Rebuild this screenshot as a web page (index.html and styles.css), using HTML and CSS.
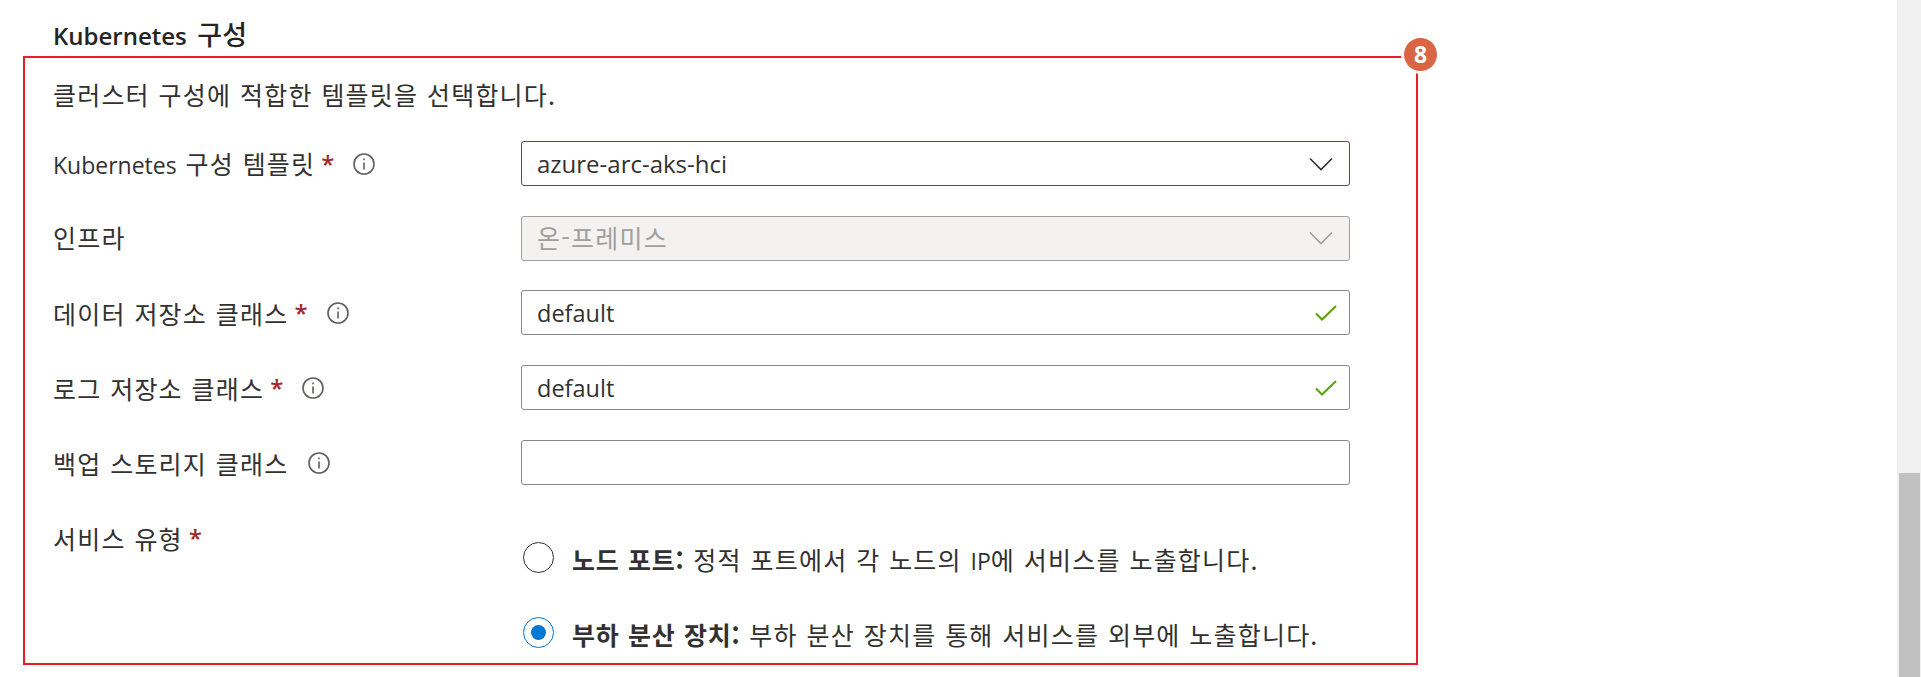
FILE: index.html
```html
<!DOCTYPE html>
<html lang="ko">
<head>
<meta charset="utf-8">
<title>Kubernetes 구성</title>
<link rel="stylesheet" href="styles.css">
</head>
<body>
<div class="page">
  <main class="content">
    <h2 class="title"><span class="lat-title">Kubernetes</span> 구성</h2>
    <section class="callout">
      <span class="badge">8</span>
      <p class="intro">클러스터 구성에 적합한 템플릿을 선택합니다.</p>
      <div class="form">
        <div class="label"><span><span class="lat">Kubernetes</span> 구성 템플릿</span><span class="req">*</span><svg class="info" viewBox="0 0 22 22"><circle cx="11" cy="11" r="10" /><path d="M11 9.5v7M11 5.6v1.6" /></svg></div>
        <div class="field purple"><span class="lat-field wide-text">azure-arc-aks-hci</span><svg class="chev" viewBox="0 0 24 14"><path d="M1 1.5l11 11 11-11" /></svg></div>

        <div class="label raised"><span>인프라</span></div>
        <div class="field disabled"><span>온-프레미스</span><svg class="chev" viewBox="0 0 24 14"><path d="M1 1.5l11 11 11-11" /></svg></div>

        <div class="label"><span>데이터 저장소 클래스</span><span class="req">*</span><svg class="info" viewBox="0 0 22 22"><circle cx="11" cy="11" r="10" /><path d="M11 9.5v7M11 5.6v1.6" /></svg></div>
        <div class="field"><span class="lat-field">default</span><svg class="check" viewBox="0 0 22 16"><path d="M1 8.5l6 6L21 1" /></svg></div>

        <div class="label"><span>로그 저장소 클래스</span><span class="req">*</span><svg class="info" viewBox="0 0 22 22"><circle cx="11" cy="11" r="10" /><path d="M11 9.5v7M11 5.6v1.6" /></svg></div>
        <div class="field"><span class="lat-field">default</span><svg class="check" viewBox="0 0 22 16"><path d="M1 8.5l6 6L21 1" /></svg></div>

        <div class="label"><span>백업 스토리지 클래스</span><svg class="info wide" viewBox="0 0 22 22"><circle cx="11" cy="11" r="10" /><path d="M11 9.5v7M11 5.6v1.6" /></svg></div>
        <div class="field"></div>

        <div class="label top"><span>서비스 유형</span><span class="req">*</span></div>
        <div class="radios">
          <div class="radio-row"><span class="radio"></span><span class="radio-text"><b>노드 포트:</b> 정적 포트에서 각 노드의 <span class="lat">IP</span>에 서비스를 노출합니다.</span></div>
          <div class="radio-row"><span class="radio on"></span><span class="radio-text"><b>부하 분산 장치:</b> 부하 분산 장치를 통해 서비스를 외부에 노출합니다.</span></div>
        </div>
      </div>
    </section>
  </main>
  <aside class="scrollbar"><div class="thumb"></div></aside>
</div>
</body>
</html>
```

FILE: styles.css
```css
* { box-sizing: border-box; }
html, body { margin: 0; height: 100%; overflow: hidden; background: #fff; }
body {
  font-family: "Noto Sans CJK KR", sans-serif;
  font-size: 25px;
  letter-spacing: 1.2px;
  word-spacing: 0.6px;
  color: #323130;
}
.lat { font-family: "Open Sans", sans-serif; font-size: 23px; letter-spacing: 0; }
.lat-field { font-family: "Open Sans", sans-serif; font-size: 23.5px; letter-spacing: 0; }
.lat-field.wide-text { font-size: 24px; }
.lat-title { font-family: "Open Sans", sans-serif; font-size: 24px; font-weight: 600; }
.page { display: flex; height: 677px; }
.content { flex: 1; padding: 0 0 0 23px; min-width: 0; }
.title {
  margin: 0;
  height: 56px;
  padding: 16px 0 0 30px;
  font-size: 27px;
  line-height: 36px;
  font-weight: 500;
  color: #252423;
  letter-spacing: 0;
  word-spacing: 3px;
}
.callout {
  position: relative;
  width: 1395px;
  height: 609px;
  border: 2px solid #ed1c24;
  padding: 18px 0 0 28px;
}
.badge {
  position: absolute;
  top: -20px;
  right: -21px;
  width: 33px;
  height: 33px;
  border-radius: 50%;
  background: #d96544;
  color: #fff;
  font-family: "Open Sans", sans-serif;
  font-size: 23px;
  font-weight: 700;
  line-height: 33px;
  letter-spacing: 0;
  text-align: center;
  box-shadow: 0 0 0 3px #fff;
}
.intro { margin: 0 0 29px; line-height: 36px; height: 36px; }
.form {
  display: grid;
  grid-template-columns: 468px 829px;
  grid-auto-rows: 45px;
  row-gap: 29.7px;
  align-items: center;
}
.label { display: flex; align-items: center; line-height: 28px; padding-top: 1px; }
.label.raised { padding-top: 0; padding-bottom: 2px; }
.label.top { align-self: start; margin-top: 9px; }
.req { color: #a4262c; margin-left: 6px; font-family: "Open Sans", sans-serif; font-size: 24px; font-weight: 600; letter-spacing: 0; }
.info { width: 22px; height: 22px; margin-left: 19px; fill: none; stroke: #605e5c; stroke-width: 1.6; }
.info.wide { margin-left: 20px; }
.field {
  display: flex;
  align-items: center;
  justify-content: space-between;
  height: 45px;
  padding: 0 16px 0 15px;
  border: 1px solid #8a8886;
  border-radius: 3px;
  color: #323130;
}
.field.purple { border-color: #7a2e9d; }
.field.disabled { background: #f3f2f1; border-color: #a19f9d; color: #a19f9d; }
.field.disabled span { margin-bottom: 3px; }
.chev { width: 24px; height: 14px; fill: none; stroke: #323130; stroke-width: 1.6; }
.disabled .chev { stroke: #a19f9d; }
.check { width: 22px; height: 16px; margin-right: -4px; fill: none; stroke: #57a300; stroke-width: 2; }
.radios { align-self: start; padding-top: 28px; display: flex; flex-direction: column; gap: 44px; }
.radio-row { display: flex; align-items: center; gap: 18px; height: 31px; padding-left: 2px; white-space: nowrap; }
.radio-row b { font-weight: 700; letter-spacing: 0.8px; }
.radio-text { margin-top: 3px; }
.radio {
  position: relative;
  flex: none;
  width: 31px;
  height: 31px;
  border: 1px solid #323130;
  border-radius: 50%;
}
.radio.on { border-color: #0078d4; }
.radio.on::after {
  content: "";
  position: absolute;
  inset: 7px;
  border-radius: 50%;
  background: #0078d4;
}
.scrollbar { flex: none; width: 24px; padding: 473px 1px 0 2px; background: #f0f0f0; }
.thumb { height: 204px; background: #c1c1c1; }
```
